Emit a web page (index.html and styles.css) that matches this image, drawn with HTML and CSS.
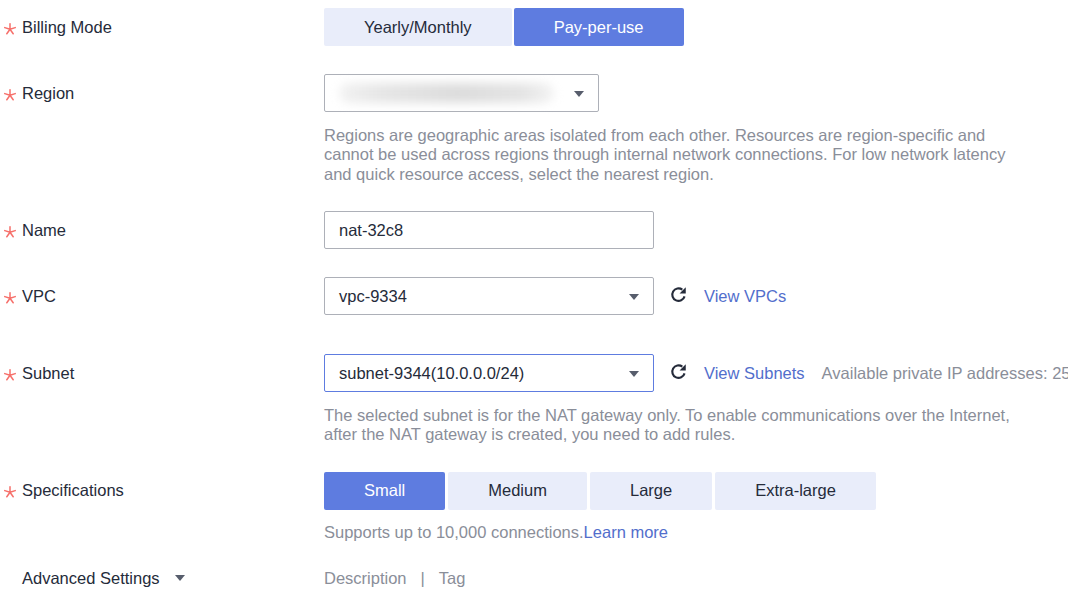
FILE: index.html
```html
<!DOCTYPE html>
<html lang="en">
<head>
<meta charset="utf-8">
<title>Buy NAT Gateway</title>
<link rel="stylesheet" href="styles.css">
</head>
<body>
<form class="form">
  <div class="row">
    <div class="label"><svg class="star" viewBox="0 0 12 12"><g stroke="#f66f6a" stroke-width="1.5" stroke-linecap="round"><line x1="6" y1="6.3" x2="6" y2="0.8"/><line x1="6" y1="6.3" x2="11.2" y2="4.6"/><line x1="6" y1="6.3" x2="9.2" y2="10.8"/><line x1="6" y1="6.3" x2="2.8" y2="10.8"/><line x1="6" y1="6.3" x2="0.8" y2="4.6"/></g></svg>Billing Mode</div>
    <div class="field">
      <div class="btn-group">
        <button type="button" class="seg">Yearly/Monthly</button>
        <button type="button" class="seg active">Pay-per-use</button>
      </div>
    </div>
  </div>

  <div class="row">
    <div class="label"><svg class="star" viewBox="0 0 12 12"><g stroke="#f66f6a" stroke-width="1.5" stroke-linecap="round"><line x1="6" y1="6.3" x2="6" y2="0.8"/><line x1="6" y1="6.3" x2="11.2" y2="4.6"/><line x1="6" y1="6.3" x2="9.2" y2="10.8"/><line x1="6" y1="6.3" x2="2.8" y2="10.8"/><line x1="6" y1="6.3" x2="0.8" y2="4.6"/></g></svg>Region</div>
    <div class="field">
      <div class="control-line">
        <div class="select select-region">
          <span class="blur"></span>
          <span class="caret"></span>
        </div>
      </div>
      <p class="help">Regions are geographic areas isolated from each other. Resources are region-specific and<br>cannot be used across regions through internal network connections. For low network latency<br>and quick resource access, select the nearest region.</p>
    </div>
  </div>

  <div class="row">
    <div class="label"><svg class="star" viewBox="0 0 12 12"><g stroke="#f66f6a" stroke-width="1.5" stroke-linecap="round"><line x1="6" y1="6.3" x2="6" y2="0.8"/><line x1="6" y1="6.3" x2="11.2" y2="4.6"/><line x1="6" y1="6.3" x2="9.2" y2="10.8"/><line x1="6" y1="6.3" x2="2.8" y2="10.8"/><line x1="6" y1="6.3" x2="0.8" y2="4.6"/></g></svg>Name</div>
    <div class="field">
      <div class="control-line">
        <div class="input">nat-32c8</div>
      </div>
    </div>
  </div>

  <div class="row row-vpc">
    <div class="label"><svg class="star" viewBox="0 0 12 12"><g stroke="#f66f6a" stroke-width="1.5" stroke-linecap="round"><line x1="6" y1="6.3" x2="6" y2="0.8"/><line x1="6" y1="6.3" x2="11.2" y2="4.6"/><line x1="6" y1="6.3" x2="9.2" y2="10.8"/><line x1="6" y1="6.3" x2="2.8" y2="10.8"/><line x1="6" y1="6.3" x2="0.8" y2="4.6"/></g></svg>VPC</div>
    <div class="field">
      <div class="control-line">
        <div class="select">vpc-9334<span class="caret"></span></div>
        <svg class="refresh" viewBox="0 0 16 16"><path d="M13.7 9.8A5.9 5.9 0 1 1 11.6 3.4" fill="none" stroke="#252b3a" stroke-width="2"/><path d="M14.8 1.2V7H9z" fill="#252b3a"/></svg>
        <a class="link">View VPCs</a>
      </div>
    </div>
  </div>

  <div class="row">
    <div class="label"><svg class="star" viewBox="0 0 12 12"><g stroke="#f66f6a" stroke-width="1.5" stroke-linecap="round"><line x1="6" y1="6.3" x2="6" y2="0.8"/><line x1="6" y1="6.3" x2="11.2" y2="4.6"/><line x1="6" y1="6.3" x2="9.2" y2="10.8"/><line x1="6" y1="6.3" x2="2.8" y2="10.8"/><line x1="6" y1="6.3" x2="0.8" y2="4.6"/></g></svg>Subnet</div>
    <div class="field">
      <div class="control-line">
        <div class="select select-focus">subnet-9344(10.0.0.0/24)<span class="caret"></span></div>
        <svg class="refresh" viewBox="0 0 16 16"><path d="M13.7 9.8A5.9 5.9 0 1 1 11.6 3.4" fill="none" stroke="#252b3a" stroke-width="2"/><path d="M14.8 1.2V7H9z" fill="#252b3a"/></svg>
        <a class="link">View Subnets</a>
        <span class="muted avail">Available private IP addresses: 251</span>
      </div>
      <p class="help">The selected subnet is for the NAT gateway only. To enable communications over the Internet,<br>after the NAT gateway is created, you need to add rules.</p>
    </div>
  </div>

  <div class="row">
    <div class="label"><svg class="star" viewBox="0 0 12 12"><g stroke="#f66f6a" stroke-width="1.5" stroke-linecap="round"><line x1="6" y1="6.3" x2="6" y2="0.8"/><line x1="6" y1="6.3" x2="11.2" y2="4.6"/><line x1="6" y1="6.3" x2="9.2" y2="10.8"/><line x1="6" y1="6.3" x2="2.8" y2="10.8"/><line x1="6" y1="6.3" x2="0.8" y2="4.6"/></g></svg>Specifications</div>
    <div class="field">
      <div class="btn-group spec-group">
        <button type="button" class="seg active">Small</button>
        <button type="button" class="seg">Medium</button>
        <button type="button" class="seg">Large</button>
        <button type="button" class="seg">Extra-large</button>
      </div>
      <p class="help">Supports up to 10,000 connections.<a class="link">Learn more</a></p>
    </div>
  </div>

  <div class="row row-adv">
    <div class="label label-plain">Advanced Settings<span class="adv-caret"></span></div>
    <div class="field">
      <div class="adv-line muted">Description<span class="sep">|</span>Tag</div>
    </div>
  </div>
</form>
</body>
</html>
```

FILE: styles.css
```css
html, body {
  margin: 0;
  padding: 0;
  background: #ffffff;
  overflow: hidden;
}

body {
  font-family: "Liberation Sans", Arial, sans-serif;
  font-size: 16.5px;
  color: #252b3a;
  width: 1068px;
  height: 606px;
}

.form {
  display: flex;
  flex-direction: column;
  gap: 28px;
  padding-top: 8px;
}

.row {
  display: grid;
  grid-template-columns: 324px 1fr;
  align-items: start;
}

.row-vpc {
  margin-bottom: 11px;
}

.row-adv {
  margin-top: -10px;
}

.label {
  height: 38px;
  display: flex;
  align-items: center;
  white-space: nowrap;
  padding-left: 4px;
}

.label-plain {
  padding-left: 22px;
}

.star {
  width: 12px;
  height: 12px;
  margin-right: 6px;
  margin-top: 3px;
  flex: none;
}

.field {
  min-width: 0;
  white-space: nowrap;
}

.btn-group {
  display: flex;
  gap: 2px;
}

.spec-group {
  gap: 3px;
}

.seg {
  height: 38px;
  border: none;
  padding: 0 40px;
  font-family: inherit;
  font-size: 16.5px;
  color: #252b3a;
  background: #e9edfa;
  border-radius: 2px;
  cursor: pointer;
  flex: none;
}

.seg.active {
  background: #5e7ce0;
  color: #ffffff;
}

.control-line {
  display: flex;
  align-items: center;
  height: 38px;
}

.select,
.input {
  box-sizing: border-box;
  height: 38px;
  width: 330px;
  flex: none;
  border: 1px solid #adb0b8;
  border-radius: 2px;
  padding: 0 14px;
  display: flex;
  align-items: center;
  position: relative;
  color: #252b3a;
}

.select-region {
  width: 275px;
}

.select-focus {
  border-color: #5e7ce0;
}

.caret {
  position: absolute;
  right: 14px;
  top: 16px;
  width: 0;
  height: 0;
  border-left: 5px solid transparent;
  border-right: 5px solid transparent;
  border-top: 6px solid #575d6c;
}

.blur {
  display: block;
  width: 215px;
  height: 20px;
  border-radius: 10px;
  background: linear-gradient(90deg, #f2f2f2 0%, #e6e6e6 20%, #dcdcdc 55%, #e4e4e4 85%, #f3f3f3 100%);
  filter: blur(5px);
}

.refresh {
  width: 17px;
  height: 17px;
  margin-left: 16px;
  margin-right: 17px;
  margin-top: -4px;
  flex: none;
}

.link {
  color: #526ecc;
  text-decoration: none;
  cursor: pointer;
  flex: none;
}

.muted {
  color: #8a8e99;
}

.avail {
  margin-left: 17px;
  flex: none;
}

.help {
  margin: 13.5px 0 -1px 0;
  line-height: 19.5px;
  color: #8a8e99;
}

.adv-caret {
  display: inline-block;
  width: 0;
  height: 0;
  margin-left: 15px;
  margin-top: -1px;
  border-left: 5px solid transparent;
  border-right: 5px solid transparent;
  border-top: 6px solid #575d6c;
}

.adv-line {
  height: 38px;
  display: flex;
  align-items: center;
}

.sep {
  margin: 0 14px;
}
```
